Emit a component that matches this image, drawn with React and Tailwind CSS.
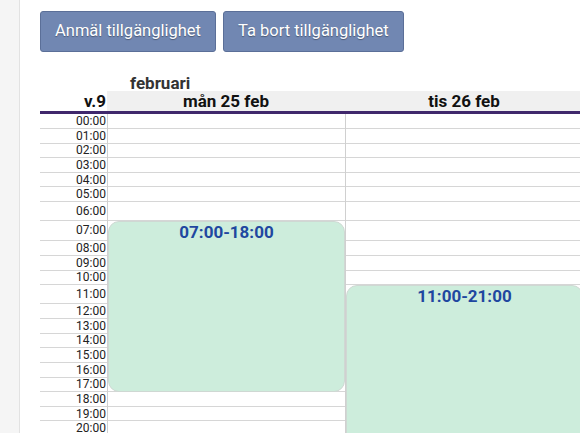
const hours = [
  { label: "00:00", h: "h-[15px]" },
  { label: "01:00", h: "h-[14.6px]" },
  { label: "02:00", h: "h-[14.6px]" },
  { label: "03:00", h: "h-[14.6px]" },
  { label: "04:00", h: "h-[14.6px]" },
  { label: "05:00", h: "h-[14.6px]" },
  { label: "06:00", h: "h-[18.6px]" },
  { label: "07:00", h: "h-[20.7px]" },
  { label: "08:00", h: "h-[14.67px]" },
  { label: "09:00", h: "h-[14.67px]" },
  { label: "10:00", h: "h-[14.67px]" },
  { label: "11:00", h: "h-[19px]" },
  { label: "12:00", h: "h-[14.67px]" },
  { label: "13:00", h: "h-[14.67px]" },
  { label: "14:00", h: "h-[14.67px]" },
  { label: "15:00", h: "h-[14.67px]" },
  { label: "16:00", h: "h-[14.67px]" },
  { label: "17:00", h: "h-[14.67px]" },
  { label: "18:00", h: "h-[14.67px]" },
  { label: "19:00", h: "h-[14.67px]" },
  { label: "20:00", h: "h-[14.67px]" },
];

const DayColumn = ({ children }) => (
  <div className="relative border-l border-[#d0d0d0]">
    {hours.map((r) => (
      <div key={r.label} className={`${r.h} border-b border-[#d6d6d6]`} />
    ))}
    {children}
  </div>
);

const Event = ({ label, className }) => (
  <div
    className={`absolute left-0 right-0 rounded-[11px] border border-[#cfd8d3] bg-[#cdeddc] text-center text-[17px] font-bold leading-[20px] text-[#1f47a0] ${className}`}
  >
    {label}
  </div>
);

export default function App() {
  return (
    <div
      className="flex h-screen overflow-hidden bg-white text-[#222]"
      style={{ fontFamily: "Roboto, 'Liberation Sans', sans-serif" }}
    >
      <div className="w-[20px] shrink-0 border-r border-[#e2e2e2] bg-[#f5f5f5]" />

      <main className="flex-1 pl-[20px]">
        <div className="mt-[11px] flex gap-[7px]">
          <button className="h-[41px] rounded-[3px] border border-[#5b6f98] bg-[#7187b2] px-[14px] text-[16.5px] text-white [text-shadow:0_1px_1px_rgba(0,0,0,0.35)]">
            Anmäl tillgänglighet
          </button>
          <button className="h-[41px] rounded-[3px] border border-[#5b6f98] bg-[#7187b2] px-[14px] text-[16.5px] text-white [text-shadow:0_1px_1px_rgba(0,0,0,0.35)]">
            Ta bort tillgänglighet
          </button>
        </div>

        <div className="mt-[21px] w-[544px]">
          <div className="h-[18px] pl-[90px] text-[17px] font-bold leading-[20px] text-[#333]">
            februari
          </div>

          <div className="grid grid-cols-[67px_238px_238px] border-b-[3px] border-[#40286c]">
            <div className="h-[20px] pr-[1px] text-right text-[17px] font-bold leading-[21px] text-[#111]">
              v.9
            </div>
            <div className="h-[20px] bg-[#f0f0f0] text-center text-[17px] font-bold leading-[21px] text-[#111]">
              mån 25 feb
            </div>
            <div className="h-[20px] bg-[#f0f0f0] text-center text-[17px] font-bold leading-[21px] text-[#111]">
              tis 26 feb
            </div>
          </div>

          <div className="grid grid-cols-[67px_238px_238px]">
            <div>
              {hours.map((r) => (
                <div
                  key={r.label}
                  className={`${r.h} flex items-center justify-end border-b border-[#d6d6d6] pr-[1px] text-[12px] text-[#222]`}
                >
                  {r.label}
                </div>
              ))}
            </div>

            <DayColumn>
              <Event label="07:00-18:00" className="top-[106.6px] h-[171.7px]" />
            </DayColumn>

            <DayColumn>
              <Event label="11:00-21:00" className="top-[171.3px] h-[200px]" />
            </DayColumn>
          </div>
        </div>
      </main>
    </div>
  );
}
